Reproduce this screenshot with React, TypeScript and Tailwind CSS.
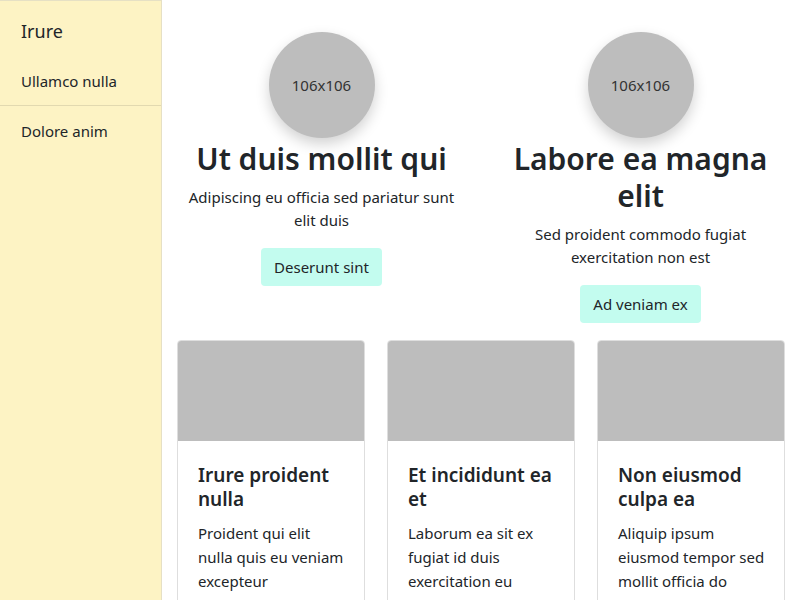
import React from "react";

const heroes = [
  {
    title: "Ut duis mollit qui",
    text: "Adipiscing eu officia sed pariatur sunt elit duis",
    action: "Deserunt sint",
  },
  {
    title: "Labore ea magna elit",
    text: "Sed proident commodo fugiat exercitation non est",
    action: "Ad veniam ex",
  },
];

const cards = [
  { title: "Irure proident nulla", text: "Proident qui elit nulla quis eu veniam excepteur" },
  { title: "Et incididunt ea et", text: "Laborum ea sit ex fugiat id duis exercitation eu" },
  { title: "Non eiusmod culpa ea", text: "Aliquip ipsum eiusmod tempor sed mollit officia do" },
];

function Sidebar() {
  return (
    <aside className="w-[162px] shrink-0 bg-[#fdf3c4] border-r border-t border-[#e6e0c4] min-h-screen">
      <div className="px-[21px] pt-[17px] pb-[13px] text-[18px] leading-[26px] text-[#212529]">Irure</div>
      <div className="px-[21px] pt-[12px] pb-[12px] text-[15px] leading-[24px] text-[#212529] border-b border-[#e2d9b0]">
        Ullamco nulla
      </div>
      <div className="px-[21px] py-[13px] text-[15px] leading-[24px] text-[#212529]">Dolore anim</div>
    </aside>
  );
}

function Hero({ title, text, action }: { title: string; text: string; action: string }) {
  return (
    <div className="flex flex-col items-center text-center">
      <div className="flex h-[106px] w-[106px] items-center justify-center rounded-full bg-[#bdbdbd] text-[15px] text-[#333] shadow-[0_6px_14px_rgba(0,0,0,0.18)]">
        106x106
      </div>
      <h2 className="mt-[2px] text-[30px] leading-[37px] font-semibold text-[#212529]">{title}</h2>
      <p className="mt-[9px] px-[10px] text-[15px] leading-[23px] text-[#212529]">{text}</p>
      <button className="mt-[16px] h-[38px] rounded-[4px] bg-[#c3fcef] px-[13px] text-[15px] text-[#212529]">
        {action}
      </button>
    </div>
  );
}

function Card({ title, text }: { title: string; text: string }) {
  return (
    <div className="overflow-hidden rounded-t-[4px] border border-[#dedede] bg-white">
      <div className="h-[100px] bg-[#bdbdbd]" />
      <div className="pl-[20px] pr-[16px] pt-[22px] pb-[20px]">
        <h3 className="text-[19px] leading-[24px] font-semibold text-[#212529]">{title}</h3>
        <p className="mt-[10px] text-[15px] leading-[24px] text-[#212529]">{text}</p>
      </div>
    </div>
  );
}

export default function App() {
  return (
    <div className="flex h-[600px] overflow-hidden bg-white font-['Noto_Sans',sans-serif]">
      <Sidebar />
      <main className="flex-1 px-[15px] pt-[32px]">
        <div className="grid grid-cols-2 gap-[30px]">
          {heroes.map((h) => (
            <Hero key={h.title} {...h} />
          ))}
        </div>
        <div className="mt-[17px] grid grid-cols-3 gap-[22px]">
          {cards.map((c) => (
            <Card key={c.title} {...c} />
          ))}
        </div>
      </main>
    </div>
  );
}
